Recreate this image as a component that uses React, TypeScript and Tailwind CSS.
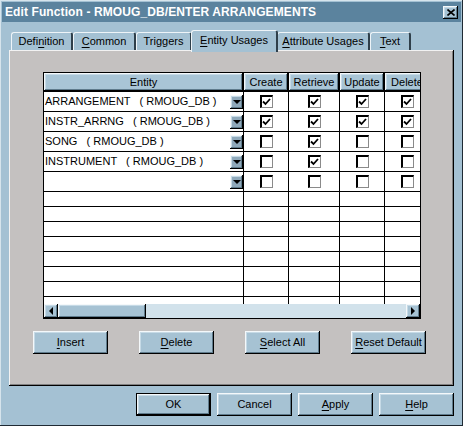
import React from "react";

type Row = { name: string; checks: boolean[] };

const rows: Row[] = [
  { name: "ARRANGEMENT   ( RMOUG_DB )", checks: [true, true, true, true] },
  { name: "INSTR_ARRNG   ( RMOUG_DB )", checks: [true, true, true, true] },
  { name: "SONG   ( RMOUG_DB )", checks: [false, true, false, false] },
  { name: "INSTRUMENT   ( RMOUG_DB )", checks: [false, true, false, false] },
  { name: "", checks: [false, false, false, false] },
];

const colWidths = ["w-[45px]", "w-[51px]", "w-[45px]", "w-[45px]"];
const headers = ["Create", "Retrieve", "Update", "Delete"];

const bevel =
  "shadow-[inset_-1px_-1px_0_#000,inset_1px_1px_0_#f4f8fa,inset_-2px_-2px_0_#5f7b8c,inset_2px_2px_0_#c6dae6]";

const Mn = ({ pre = "", u, post = "" }: { pre?: string; u: string; post?: string }) => (
  <span>
    {pre}
    <span className="underline underline-offset-[2px]">{u}</span>
    {post}
  </span>
);

const Checkbox = ({ checked }: { checked: boolean }) => (
  <div className="w-[13px] h-[13px] bg-white border-t-2 border-l-2 border-black border-r border-b border-r-[#8a8a8a] border-b-[#8a8a8a] flex items-center justify-center">
    {checked && (
      <svg width="9" height="8" viewBox="0 0 9 8">
        <path d="M1 3.5 L3.5 6 L8 1" fill="none" stroke="#000" strokeWidth="1.8" />
      </svg>
    )}
  </div>
);

const DropButton = () => (
  <div className={`w-[13px] h-[14px] bg-[#8fa9bb] flex items-center justify-center ${bevel}`}>
    <div className="w-0 h-0 border-l-[4px] border-r-[4px] border-t-[4px] border-l-transparent border-r-transparent border-t-black" />
  </div>
);

const Button = ({ children, def = false, w = "w-[75px]" }: { children: React.ReactNode; def?: boolean; w?: string }) => (
  <div className={`${w} h-[23px] ${def ? "border border-black" : ""}`}>
    <div className={`w-full h-full bg-[#a6c2d3] flex items-center justify-center text-[11px] ${bevel}`}>
      {children}
    </div>
  </div>
);

const Tab = ({ children, w, active = false }: { children: React.ReactNode; w: string; active?: boolean }) => (
  <div
    className={`${w} ${
      active ? "h-[22px] -mb-[2px] relative z-10 -mx-[1px] pb-[2px]" : "h-[18px]"
    } bg-[#a4c1d3] rounded-t-[3px] border-t border-l border-[#eef4f8] border-r-2 border-r-[#2f3f4a] flex items-center justify-center text-[11px] whitespace-nowrap`}
  >
    {children}
  </div>
);

export default function App() {
  return (
    <div className="w-[463px] h-[426px] bg-[#a4c1d3] p-[2px] flex flex-col font-['Liberation_Sans',Arial,sans-serif] text-black shadow-[inset_-1px_-1px_0_#1f2a33,inset_1px_1px_0_#d6e4ec]">
      {/* title bar */}
      <div className="h-[20px] bg-[#5b839e] flex items-center pl-[3px] pr-[3px]">
        <span className="text-white font-bold text-[12px] tracking-[0.1px]">
          Edit Function - RMOUG_DB/ENTER ARRANGEMENTS
        </span>
        <div className={`ml-auto w-[15px] h-[13px] bg-[#a6c2d3] flex items-center justify-center ${bevel}`}>
          <svg width="8" height="7" viewBox="0 0 8 7">
            <path d="M0.5 0.5 L7.5 6.5 M7.5 0.5 L0.5 6.5" stroke="#000" strokeWidth="1.6" />
          </svg>
        </div>
      </div>

      {/* tabs */}
      <div className="h-[28px] flex items-end pl-[9px]">
        <Tab w="w-[62px]"><Mn pre="Defi" u="n" post="ition" /></Tab>
        <Tab w="w-[63px]"><Mn u="C" post="ommon" /></Tab>
        <Tab w="w-[56px]">Triggers</Tab>
        <Tab w="w-[87px]" active><Mn u="E" post="ntity Usages" /></Tab>
        <Tab w="w-[93px]"><Mn u="A" post="ttribute Usages" /></Tab>
        <Tab w="w-[41px]"><Mn u="T" post="ext" /></Tab>
      </div>

      {/* tab page */}
      <div className="ml-[7px] w-[445px] h-[336px] bg-[#c4c1c0] flex flex-col pt-[22px] shadow-[inset_-1px_-1px_0_#000,inset_1px_1px_0_#f2f2f2,inset_-2px_-2px_0_#808080]">
        {/* grid */}
        <div className="ml-[34px] w-[378px] h-[247px] border border-black bg-white overflow-hidden flex flex-col text-[11px]">
          <div className="flex h-[19px] border-b border-black shrink-0 w-[386px]">
            <div className={`w-[200px] border-r border-black bg-[#a9c5d6] flex items-center justify-center ${bevel}`}>
              Entity
            </div>
            {headers.map((h, i) => (
              <div
                key={h}
                className={`${colWidths[i]} border-r border-black bg-[#a9c5d6] flex items-center justify-center whitespace-nowrap ${bevel}`}
              >
                {h}
              </div>
            ))}
          </div>
          <div className="h-[212px] overflow-hidden shrink-0">
            {rows.map((r, ri) => (
              <div key={ri} className="flex h-[20px] border-b border-black w-[386px]">
                <div className="w-[200px] border-r border-black flex items-center pl-[1px]">
                  <span className="whitespace-pre">{r.name}</span>
                  <div className="ml-auto">
                    <DropButton />
                  </div>
                </div>
                {r.checks.map((c, ci) => (
                  <div key={ci} className={`${colWidths[ci]} border-r border-black flex items-center justify-center`}>
                    <Checkbox checked={c} />
                  </div>
                ))}
              </div>
            ))}
            {Array.from({ length: 8 }).map((_, i) => (
              <div key={i} className="flex h-[15px] border-b border-black w-[386px]">
                <div className="w-[200px] border-r border-black" />
                {colWidths.map((w, ci) => (
                  <div key={ci} className={`${w} border-r border-black`} />
                ))}
              </div>
            ))}
          </div>
          {/* horizontal scrollbar */}
          <div className="h-[14px] flex bg-[#d2e2eb] shrink-0">
            <div className={`w-[14px] h-[14px] bg-[#a6c2d3] flex items-center justify-center ${bevel}`}>
              <div className="w-0 h-0 border-t-[4px] border-b-[4px] border-r-[4px] border-t-transparent border-b-transparent border-r-black" />
            </div>
            <div className={`w-[88px] h-[14px] bg-[#a6c2d3] ${bevel}`} />
            <div className="flex-1" />
            <div className={`w-[14px] h-[14px] bg-[#a6c2d3] flex items-center justify-center ${bevel}`}>
              <div className="w-0 h-0 border-t-[4px] border-b-[4px] border-l-[4px] border-t-transparent border-b-transparent border-l-black" />
            </div>
          </div>
        </div>

        {/* page buttons */}
        <div className="mt-[12px] ml-[24px] flex gap-[31px]">
          <Button><Mn u="I" post="nsert" /></Button>
          <Button><Mn u="D" post="elete" /></Button>
          <Button><Mn u="S" post="elect All" /></Button>
          <Button><Mn u="R" post="eset Default" /></Button>
        </div>
      </div>

      {/* dialog buttons */}
      <div className="mt-[7px] ml-[134px] flex gap-[6px]">
        <Button def>OK</Button>
        <Button>Cancel</Button>
        <Button><Mn u="A" post="pply" /></Button>
        <Button><Mn u="H" post="elp" /></Button>
      </div>
    </div>
  );
}
